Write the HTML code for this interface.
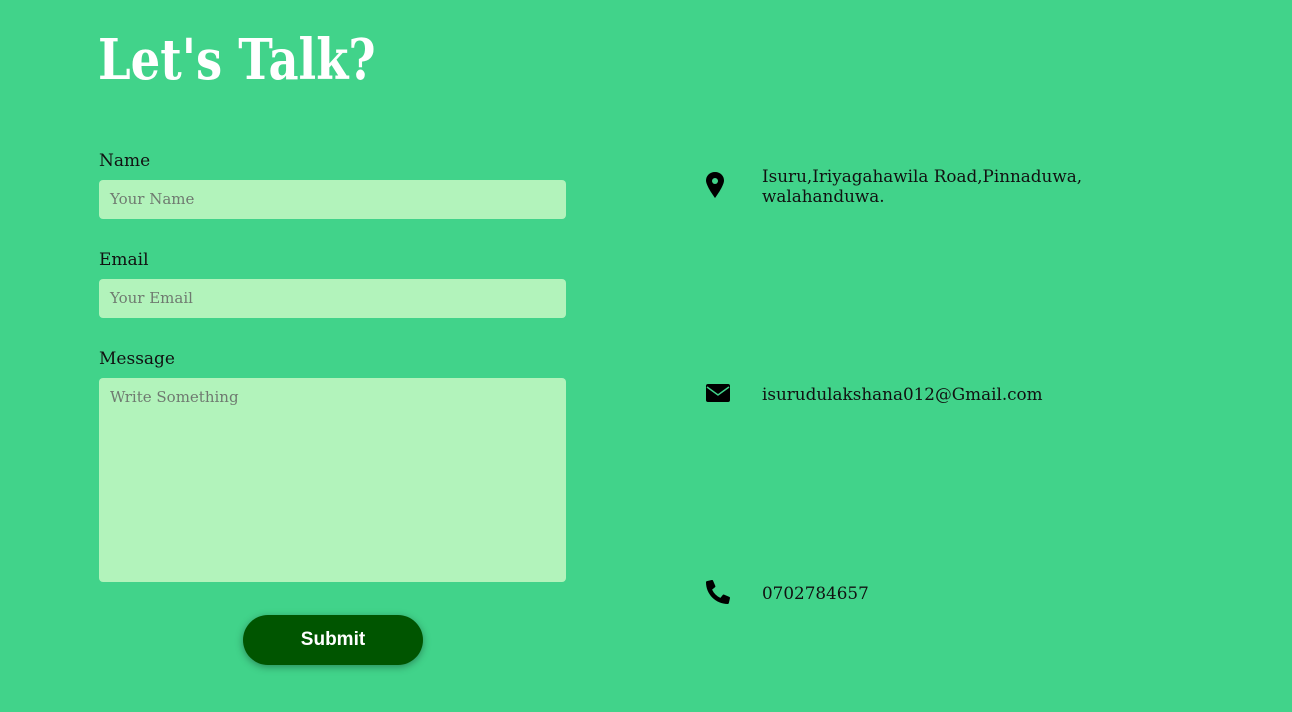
<!DOCTYPE html>
<html><head><meta charset="utf-8"><style>
*{margin:0;padding:0;box-sizing:border-box}
body{width:1292px;height:712px;background:#41d38a;font-family:"DejaVu Serif","Liberation Serif",serif;position:relative;overflow:hidden;color:#111}
h1{position:absolute;left:98px;top:27px;font-size:56px;font-weight:bold;color:#fff;line-height:66px;transform:scaleX(0.83);transform-origin:0 0;white-space:nowrap}
.lbl{position:absolute;left:99px;font-size:17px;color:#111}
.in{position:absolute;left:99px;width:467px;height:39px;background:#b2f3bb;border-radius:4px;font-size:15px;color:#6f7a70;padding:10px 11px}
.btn{position:absolute;left:243px;top:615px;width:180px;height:50px;border-radius:25px;background:#005500;color:#fff;font-family:"Liberation Sans",sans-serif;font-weight:bold;font-size:19px;text-align:center;line-height:50px;box-shadow:0 2px 8px rgba(0,0,0,.35)}
.t{position:absolute;left:762px;font-size:16.8px;line-height:20px;color:#111}
svg{position:absolute}
</style></head><body>
<h1>Let's Talk?</h1>
<div class="lbl" style="top:151px">Name</div>
<div class="in" style="top:180px">Your Name</div>
<div class="lbl" style="top:250px">Email</div>
<div class="in" style="top:279px">Your Email</div>
<div class="lbl" style="top:349px">Message</div>
<div class="in" style="top:378px;height:204px">Write Something</div>
<div class="btn">Submit</div>

<svg style="left:705px;top:172px" width="20" height="26" viewBox="0 0 20 26"><path d="M10 0C4.5 0 1 4 1 8.5 1 14 10 26 10 26S19 14 19 8.5C19 4 15.5 0 10 0Z" fill="#000"/><circle cx="10" cy="9" r="3" fill="#41d38a"/></svg>
<div class="t" style="top:166px">Isuru,Iriyagahawila Road,Pinnaduwa,<br>walahanduwa.</div>

<svg style="left:706px;top:384px" width="24" height="18" viewBox="0 0 24 18"><rect width="24" height="18" rx="2" fill="#000"/><path d="M1 3l11 8 11-8" stroke="#41d38a" stroke-width="1.5" fill="none"/></svg>
<div class="t" style="top:384px">isurudulakshana012@Gmail.com</div>

<svg style="left:706px;top:580px" width="24" height="24" viewBox="0 0 512 512"><path fill="#000" d="M497 361l-112-48a24 24 0 0 0-28 7l-50 61A371 371 0 0 1 130 204l61-50a24 24 0 0 0 7-28L150 14a24 24 0 0 0-28-14L18 24A24 24 0 0 0 0 48c0 257 208 464 464 464a24 24 0 0 0 23-19l24-104a24 24 0 0 0-14-28z"/></svg>
<div class="t" style="top:583px">0702784657</div>
</body></html>
